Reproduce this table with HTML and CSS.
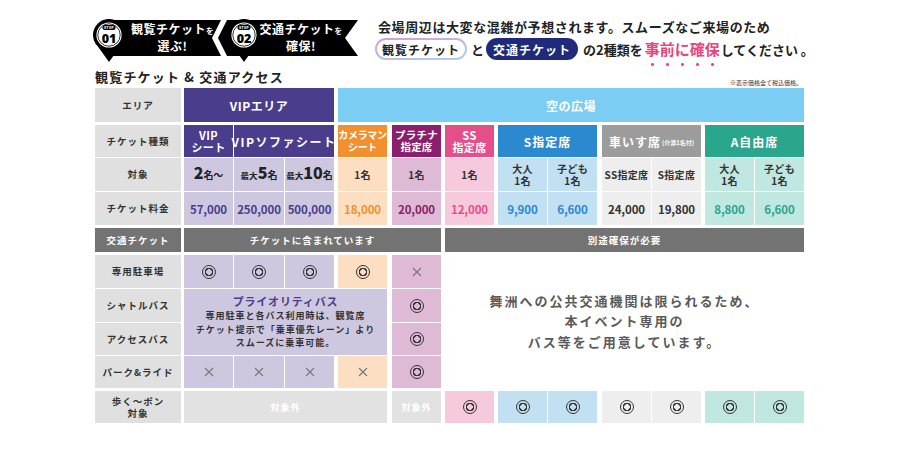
FILE: index.html
```html
<!DOCTYPE html>
<html lang="ja">
<head>
<meta charset="utf-8">
<title>観覧チケット & 交通アクセス</title>
<link rel="stylesheet" href="styles.css">
</head>
<body>
<div class="page">
  <header class="top">
    <div class="steps">
      <div class="step">
        <svg class="pin" viewBox="0 0 32 44" width="32" height="44">
          <path d="M16 43 L4.7 27.3 A16 16 0 1 1 27.3 27.3 Z" fill="#000"/>
          <circle cx="16" cy="16" r="12.6" fill="#fff"/>
          <circle cx="16" cy="16" r="11.2" fill="none" stroke="#000" stroke-width="0.8"/>
          <rect x="9.5" y="6" width="13" height="5" rx="2.5" fill="#000"/>
          <text x="16" y="10" class="pin-step">STEP</text>
          <text x="16" y="23.5" class="pin-num">01</text>
        </svg>
        <div class="banner b1"><span>観覧チケット<small>を</small></span><span>選ぶ!</span></div>
      </div>
      <div class="step">
        <svg class="pin pin2" viewBox="0 0 32 44" width="32" height="44">
          <path d="M16 43 L4.7 27.3 A16 16 0 1 1 27.3 27.3 Z" fill="#000"/>
          <circle cx="16" cy="16" r="12.6" fill="#fff"/>
          <circle cx="16" cy="16" r="11.2" fill="none" stroke="#000" stroke-width="0.8"/>
          <rect x="9.5" y="6" width="13" height="5" rx="2.5" fill="#000"/>
          <text x="16" y="10" class="pin-step">STEP</text>
          <text x="16" y="23.5" class="pin-num">02</text>
        </svg>
        <div class="banner b2"><span>交通チケット<small>を</small></span><span>確保!</span></div>
      </div>
    </div>
    <div class="notice">
      <p class="n1">会場周辺は大変な混雑が予想されます。スムーズなご来場のため</p>
      <p class="n2"><span class="pill pill-a">観覧チケット</span><span class="to">と</span><span class="pill pill-b">交通チケット</span><span class="kinds">の2種類を</span><em class="em">事前に確保</em><span class="tail">してください 。</span></p>
    </div>
  </header>

  <div class="titlebar">
    <h1>観覧チケット &amp; 交通アクセス</h1>
    <span class="note">※表示価格全て税込価格。</span>
  </div>

  <div class="grid">
    <!-- area -->
    <div class="cell lab r1 c-lab">エリア</div>
    <div class="cell h vip r1 c-vipall">VIPエリア</div>
    <div class="cell h sky r1 c-sky">空の広場</div>

    <!-- ticket type -->
    <div class="cell lab r3 c-lab">チケット種類</div>
    <div class="cell h vip r3 c-v1 two">VIP<br>シート</div>
    <div class="cell h vip r3 c-v23 wide">VIPソファシート</div>
    <div class="cell h cam r3 c-cam two narrow">カメラマン<br>シート</div>
    <div class="cell h plat r3 c-plat two mid">プラチナ<br>指定席</div>
    <div class="cell h ss r3 c-ss two">SS<br>指定席</div>
    <div class="cell h s r3 c-s12 big">S指定席</div>
    <div class="cell h wc r3 c-w12 big">車いす席<small class="tiny">(介添1名付)</small></div>
    <div class="cell h a r3 c-a12 big">A自由席</div>

    <!-- target -->
    <div class="cell lab r4 c-lab">対象</div>
    <div class="cell vip-l r4 c-v1 qty"><b class="num">2</b><span class="unit">名〜</span></div>
    <div class="cell vip-l r4 c-v2 qty"><span class="pre">最大</span><b class="num">5</b><span class="unit">名</span></div>
    <div class="cell vip-l r4 c-v3 qty"><span class="pre">最大</span><b class="num">10</b><span class="unit">名</span></div>
    <div class="cell cam-l r4 c-cam t">1名</div>
    <div class="cell plat-l r4 c-plat t">1名</div>
    <div class="cell ss-l r4 c-ss t">1名</div>
    <div class="cell s-l r4 c-s1 t">大人<br>1名</div>
    <div class="cell s-l r4 c-s2 t">子ども<br>1名</div>
    <div class="cell wc-l r4 c-w1 t">SS指定席</div>
    <div class="cell wc-l r4 c-w2 t">S指定席</div>
    <div class="cell a-l r4 c-a1 t">大人<br>1名</div>
    <div class="cell a-l r4 c-a2 t">子ども<br>1名</div>

    <!-- price -->
    <div class="cell lab r5 c-lab">チケット料金</div>
    <div class="cell vip-l r5 c-v1 price p-vip">57,000</div>
    <div class="cell vip-l r5 c-v2 price p-vip">250,000</div>
    <div class="cell vip-l r5 c-v3 price p-vip">500,000</div>
    <div class="cell cam-l r5 c-cam price p-cam">18,000</div>
    <div class="cell plat-l r5 c-plat price p-plat">20,000</div>
    <div class="cell ss-l r5 c-ss price p-ss">12,000</div>
    <div class="cell s-l r5 c-s1 price p-s">9,900</div>
    <div class="cell s-l r5 c-s2 price p-s">6,600</div>
    <div class="cell wc-l r5 c-w1 price p-wc">24,000</div>
    <div class="cell wc-l r5 c-w2 price p-wc">19,800</div>
    <div class="cell a-l r5 c-a1 price p-a">8,800</div>
    <div class="cell a-l r5 c-a2 price p-a">6,600</div>

    <!-- traffic header -->
    <div class="cell lab dark r7 c-lab">交通チケット</div>
    <div class="cell dark sub r7 c-incl">チケットに含まれています</div>
    <div class="cell dark sub r7 c-sky2">別途確保が必要</div>

    <!-- parking -->
    <div class="cell lab r9 c-lab">専用駐車場</div>
    <div class="cell vip-l r9 c-v1"><span class="o"></span></div>
    <div class="cell vip-l r9 c-v2"><span class="o"></span></div>
    <div class="cell vip-l r9 c-v3"><span class="o"></span></div>
    <div class="cell cam-l r9 c-cam"><span class="o"></span></div>
    <div class="cell plat-l r9 c-plat"><svg class="x" viewBox="0 0 10 10"><path d="M1 1L9 9M9 1L1 9"/></svg></div>

    <!-- shuttle / access -->
    <div class="cell lab r10 c-lab">シャトルバス</div>
    <div class="cell lab r11 c-lab">アクセスバス</div>
    <div class="cell vip-l prio">
      <span class="prio-t">プライオリティバス</span>
      <span class="prio-d">専用駐車と各バス利用時は、観覧席<br>チケット提示で「乗車優先レーン」より<br>スムーズに乗車可能。</span>
    </div>
    <div class="cell plat-l r10 c-plat"><span class="o"></span></div>
    <div class="cell plat-l r11 c-plat"><span class="o"></span></div>

    <!-- park and ride -->
    <div class="cell lab r12 c-lab">パーク&amp;ライド</div>
    <div class="cell vip-l r12 c-v1"><svg class="x" viewBox="0 0 10 10"><path d="M1 1L9 9M9 1L1 9"/></svg></div>
    <div class="cell vip-l r12 c-v2"><svg class="x" viewBox="0 0 10 10"><path d="M1 1L9 9M9 1L1 9"/></svg></div>
    <div class="cell vip-l r12 c-v3"><svg class="x" viewBox="0 0 10 10"><path d="M1 1L9 9M9 1L1 9"/></svg></div>
    <div class="cell cam-l r12 c-cam"><svg class="x" viewBox="0 0 10 10"><path d="M1 1L9 9M9 1L1 9"/></svg></div>
    <div class="cell plat-l r12 c-plat"><span class="o"></span></div>

    <div class="cell msg">舞洲への公共交通機関は限られるため、<br>本イベント専用の<br>バス等をご用意しています。</div>

    <!-- walk -->
    <div class="cell lab r14 c-lab two-l">歩く〜ポン<br>対象</div>
    <div class="cell na r14 c-na1">対象外</div>
    <div class="cell na r14 c-plat">対象外</div>
    <div class="cell ss-l r14 c-ss"><span class="o"></span></div>
    <div class="cell s-l r14 c-s1"><span class="o"></span></div>
    <div class="cell s-l r14 c-s2"><span class="o"></span></div>
    <div class="cell wc-l r14 c-w1"><span class="o"></span></div>
    <div class="cell wc-l r14 c-w2"><span class="o"></span></div>
    <div class="cell a-l r14 c-a1"><span class="o"></span></div>
    <div class="cell a-l r14 c-a2"><span class="o"></span></div>
  </div>
</div>
</body>
</html>
```

FILE: styles.css
```css
* { box-sizing: border-box; }
html, body { margin: 0; padding: 0; }
body {
  width: 900px;
  height: 450px;
  overflow: hidden;
  background: #fff;
  color: #222;
  font-family: "Noto Sans CJK JP", "Noto Sans", sans-serif;
}
.page { padding-left: 95px; }

/* ---------- top ---------- */
.top { display: flex; height: 66px; padding-top: 18px; }
.steps { display: flex; margin-top: 1px; margin-left: -2px; }
.step { display: flex; align-items: flex-start; }
.pin { flex: none; position: relative; z-index: 1; }
.pin2 { margin-left: 7px; }
.pin-step { font-size: 4px; font-weight: 700; fill: #fff; text-anchor: middle; letter-spacing: 0.2px; font-family: "Noto Sans", sans-serif; }
.pin-num { font-size: 12.5px; font-weight: 900; fill: #000; text-anchor: middle; font-family: "Noto Sans", sans-serif; }
.banner {
  flex: none;
  height: 36px;
  margin-top: 1px;
  background: #000;
  color: #fff;
  font-weight: 700;
  font-size: 12px;
  line-height: 15px;
  letter-spacing: 0.5px;
  display: flex;
  flex-direction: column;
  align-items: center;
  justify-content: center;
  padding-bottom: 2px;
  white-space: nowrap;
}
.banner small { font-size: 7.5px; }
.b1 {
  width: 113px;
  margin-left: -17px;
  padding-left: 24px;
  padding-right: 8px;
  clip-path: polygon(0 0, 113px 0, 104px 18px, 113px 36px, 0 36px);
}
.b2 {
  width: 140px;
  margin-left: -42px;
  padding-left: 44px;
  padding-right: 18px;
  clip-path: polygon(9px 0, 140px 0, 127px 18px, 140px 36px, 9px 36px, 0 18px);
}

.notice { margin-left: 17px; }
.n1 {
  margin: 0;
  padding-left: 3px;
  font-size: 13px;
  font-weight: 700;
  line-height: 18px;
  letter-spacing: 0.6px;
  white-space: nowrap;
}
.n2 {
  margin: 2px 0 0;
  display: flex;
  align-items: center;
  height: 22px;
  font-size: 13px;
  font-weight: 700;
  white-space: nowrap;
}
.pill {
  height: 22px;
  width: 92px;
  border-radius: 11px;
  display: flex;
  align-items: center;
  justify-content: center;
  font-size: 12px;
  letter-spacing: 1px;
}
.pill-a {
  border: 2px solid transparent;
  background: linear-gradient(#fff, #fff) padding-box, linear-gradient(170deg, #d99ccf, #a6d6ee) border-box;
  color: #222;
}
.pill-b { background: #1f2b7a; color: #fff; }
.to { margin: 0 2px 0 4px; }
.kinds { margin-left: 5px; }
.em {
  font-style: normal;
  color: #e8457f;
  font-size: 15px;
  line-height: 20px;
  margin-left: 2px;
  padding-bottom: 8px;
  margin-bottom: -8px;
  background: radial-gradient(circle, #e8457f 1.2px, transparent 1.7px) repeat-x;
  background-size: 15px 5px;
  background-position: 0 100%;
}
.tail { margin-left: 1px; }

/* ---------- title ---------- */
.titlebar {
  width: 707px;
  height: 22px;
  display: flex;
  justify-content: space-between;
  align-items: flex-end;
}
.titlebar h1 {
  margin: 0 0 3px;
  font-size: 13px;
  line-height: 16px;
  font-weight: 700;
  letter-spacing: 1.2px;
}
.note { font-size: 6px; line-height: 8px; color: #333; margin-bottom: 1px; }

/* ---------- grid ---------- */
.grid {
  display: grid;
  width: 709px;
  grid-template-columns: 86px 1px 49px 50px 49px 2px 49px 3px 49px 2px 49px 2px 49px 49px 3px 49px 49px 2px 49px 49px;
  grid-template-rows: 34px 1px 32px 33px 33px 1px 24px 1px 33px 33px 32px 32px 1px 32px;
  column-gap: 1px;
  row-gap: 1px;
}
.cell {
  display: flex;
  align-items: center;
  justify-content: center;
  text-align: center;
  font-weight: 700;
  white-space: nowrap;
}

/* rows */
.r1 { grid-row: 1; }
.r3 { grid-row: 3; }
.r4 { grid-row: 4; }
.r5 { grid-row: 5; }
.r7 { grid-row: 7; }
.r9 { grid-row: 9; }
.r10 { grid-row: 10; }
.r11 { grid-row: 11; }
.r12 { grid-row: 12; }
.r14 { grid-row: 14; }

/* columns */
.c-lab { grid-column: 1; }
.c-vipall { grid-column: 3 / 6; }
.c-sky { grid-column: 7 / 21; }
.c-v1 { grid-column: 3; }
.c-v2 { grid-column: 4; }
.c-v3 { grid-column: 5; }
.c-v23 { grid-column: 4 / 6; }
.c-cam { grid-column: 7; }
.c-plat { grid-column: 9; }
.c-ss { grid-column: 11; }
.c-s1 { grid-column: 13; }
.c-s2 { grid-column: 14; }
.c-s12 { grid-column: 13 / 15; }
.c-w1 { grid-column: 16; }
.c-w2 { grid-column: 17; }
.c-w12 { grid-column: 16 / 18; }
.c-a1 { grid-column: 19; }
.c-a2 { grid-column: 20; }
.c-a12 { grid-column: 19 / 21; }
.c-incl { grid-column: 3 / 10; }
.c-sky2 { grid-column: 11 / 21; }
.c-na1 { grid-column: 3 / 8; }

/* labels */
.lab {
  background: #e0e0e0;
  color: #333;
  font-size: 9.5px;
  line-height: 11px;
  letter-spacing: 1px;
}
.lab.two-l { line-height: 12px; }
.dark { background: #737373; color: #fff; }
.sub { font-size: 9.5px; letter-spacing: 1px; }

/* headers */
.h { color: #fff; font-size: 12px; line-height: 13px; letter-spacing: 0.5px; }
.h.two { font-size: 11px; line-height: 12px; letter-spacing: 0.4px; }
.h.narrow { font-size: 10px; letter-spacing: -0.3px; }
.h.mid { font-size: 10.5px; letter-spacing: 0.2px; }
.h.wide { letter-spacing: 1.5px; }
.h.big { font-size: 12px; letter-spacing: 1px; }
.tiny { font-size: 6px; letter-spacing: 0; margin-left: 1px; margin-top: 2px; }

.vip { background: #4a3d8c; }
.sky { background: #7ccdf3; }
.cam { background: #f2902e; }
.plat { background: #8b1e6d; }
.ss { background: #e44f89; }
.s { background: #2a89cf; }
.wc { background: #9c9c9c; }
.a { background: #2aa68d; }

.vip-l { background: #cdc8e0; }
.cam-l { background: #fcdfc2; }
.plat-l { background: #dfbad6; }
.ss-l { background: #f6c9dc; }
.s-l { background: #c1e0f2; }
.wc-l { background: #eeeeee; }
.a-l { background: #c1e7e1; }
.na { background: #e2e2e2; color: #fff; font-size: 9px; letter-spacing: 1px; }

/* body text */
.t { font-size: 10px; line-height: 12px; color: #333; letter-spacing: 0.3px; }
.qty { color: #222; align-items: baseline; padding-top: 4px; }
.num { font-size: 16px; line-height: 20px; }
.unit { font-size: 10px; }
.pre { font-size: 8.5px; }

.price { font-size: 11.5px; font-weight: 700; letter-spacing: -0.1px; }
.p-vip { color: #4a3d8c; }
.p-cam { color: #f2902e; }
.p-plat { color: #8b1e6d; }
.p-ss { color: #e44f89; }
.p-s { color: #2a89cf; }
.p-wc { color: #333; }
.p-a { color: #2aa68d; }

/* marks */
.o {
  width: 14px;
  height: 14px;
  border: 1.3px solid #333;
  border-radius: 50%;
  background: radial-gradient(circle closest-side, transparent 2.7px, #333 3px, #333 4.2px, transparent 4.5px);
}
.x { width: 10px; height: 10px; fill: none; stroke: #777; stroke-width: 1.1; }

/* priority */
.prio {
  grid-column: 3 / 8;
  grid-row: 10 / 12;
  flex-direction: column;
}
.prio-t { font-size: 11px; line-height: 15px; color: #4a3d8c; letter-spacing: 0.8px; }
.prio-d { font-size: 9px; line-height: 13.5px; color: #333; letter-spacing: 1px; }

.msg {
  grid-column: 11 / 21;
  grid-row: 9 / 13;
  font-size: 13px;
  line-height: 20.5px;
  letter-spacing: 2px;
  color: #5a5a5a;
  font-weight: 700;
}
```
